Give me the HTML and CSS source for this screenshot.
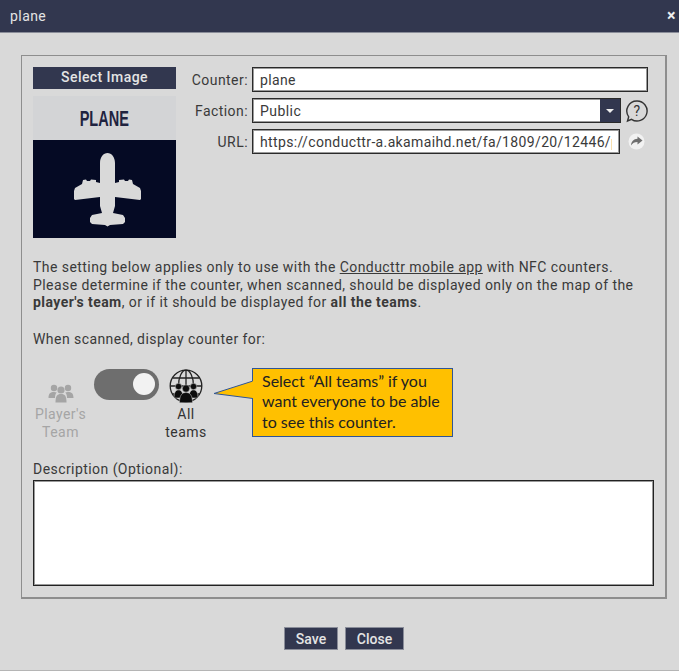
FILE: index.html
```html
<!DOCTYPE html>
<html lang="en">
<head>
  <meta charset="UTF-8" />
  <meta name="viewport" content="width=device-width, initial-scale=1.0"/>
  <title>plane</title>
  <link rel="stylesheet" href="styles.css">
</head>
<body>
  <div class="dialog">
    <div class="title-bar">
      <span class="title">plane</span>
      <span class="close-x">&#215;</span>
    </div>

    <div class="panel">
      <div class="top-row">
        <div class="image-col">
          <div class="select-image">Select Image</div>
          <div class="thumb">
            <div class="thumb-top"><span class="thumb-name">PLANE</span></div>
            <div class="thumb-bottom">
              <svg width="143" height="98" viewBox="0 0 143 98">
                <path fill="#d9d9d9" d="M74.500 13C70.500 13 67 17 67 23V43L63 42V40L58 39.500L57 41H54L53 39.500L50 40L49 44L42 48L41 51V59L42 60L67 57V66L69 73L59 75L57 78V82L59 84L72 85L74.500 86.500L77 85L90 84L92 82V78L90 75L80 73L82 66V57L107 60L108 59V51L107 48L100 44L99 40L96 39.500L95 41H92L91 39.500L86 40V42L82 43V23C82 17 78.500 13 74.500 13Z"/>
              </svg>
            </div>
          </div>
        </div>

        <div class="fields">
          <div class="field">
            <label class="field-label">Counter:</label>
            <input class="text-input counter-input" type="text" value="plane" />
          </div>
          <div class="field faction-field">
            <label class="field-label">Faction:</label>
            <div class="select-box">
              <span class="select-value">Public</span>
              <span class="select-arrow"></span>
            </div>
            <svg class="help-icon" width="24" height="24" viewBox="0 0 24 24">
              <path fill="none" stroke="#333" stroke-width="1.400" d="M12 2a10 10 0 1 1-5.500 18.300L2.500 22l1.200-4.200A10 10 0 0 1 12 2Z"/>
              <text x="12" y="17" text-anchor="middle" class="help-mark">?</text>
            </svg>
          </div>
          <div class="field url-field">
            <label class="field-label">URL:</label>
            <input class="text-input url-input" type="text" value="https://conducttr-a.akamaihd.net/fa/1809/20/12446/plane.png" />
            <svg class="share-icon" width="17" height="17" viewBox="0 0 17 17">
              <circle cx="8.500" cy="8.500" r="8" fill="#f2f2f2"/>
              <path fill="#6f6f6f" d="M9.500 3.500L14.500 7.500L9.500 11.500V9C6.500 9 4.500 10 3 12.500C3.300 8.800 5.500 6 9.500 5.800Z"/>
            </svg>
          </div>
        </div>
      </div>

      <p class="note">The setting below applies only to use with the <u>Conducttr mobile app</u> with NFC counters.<br>
        Please determine if the counter, when scanned, should be displayed only on the map of the<br>
        <b>player's team</b>, or if it should be displayed for <b>all the teams</b>.</p>

      <p class="scan-label">When scanned, display counter for:</p>

      <div class="scan-row">
        <div class="scan-option off">
          <div class="scan-icon">
            <svg width="26" height="20" viewBox="0 0 26 20">
              <g fill="#a5a5a5">
                <circle cx="6" cy="5" r="3.200"/>
                <circle cx="20" cy="5" r="3.200"/>
                <circle cx="13" cy="7" r="3.600"/>
                <path d="M0.500 15C0.500 10.500 2.500 9 6 9C7 9 8 9.200 8.700 9.600C7.500 10.800 7 12.500 7 15Z"/>
                <path d="M25.500 15C25.500 10.500 23.500 9 20 9C19 9 18 9.200 17.300 9.600C18.500 10.800 19 12.500 19 15Z"/>
                <path d="M7.500 19.500C7.500 13 9 11 13 11C17 11 18.500 13 18.500 19.500Z"/>
              </g>
            </svg>
          </div>
          <div class="scan-text">Player's<br>Team</div>
        </div>

        <div class="toggle"><span class="toggle-knob"></span></div>

        <div class="scan-option on">
          <div class="scan-icon">
            <svg width="34" height="34" viewBox="0 0 34 34">
              <g fill="none" stroke="#222" stroke-width="1.300">
                <circle cx="17" cy="17" r="15.800"/>
                <ellipse cx="17" cy="17" rx="7.500" ry="15.800"/>
                <path d="M17 1.200V33M1.200 17H32.800M3.500 9H30.500M3.500 25H30.500"/>
              </g>
              <g fill="#0c0c0c" stroke="#d9d9d9" stroke-width="0.500">
                <circle cx="9.500" cy="17.500" r="3.200"/>
                <circle cx="24.500" cy="17.500" r="3.200"/>
                <path d="M5 29C5 23.500 6.500 21 9.500 21C12.500 21 14 23.500 14 29Z"/>
                <path d="M20 29C20 23.500 21.500 21 24.500 21C27.500 21 29 23.500 29 29Z"/>
                <circle cx="17" cy="19.500" r="3.700"/>
                <path d="M10.500 33.800C10.500 26.500 12.800 23.500 17 23.500C21.200 23.500 23.500 26.500 23.500 33.800Z"/>
              </g>
            </svg>
          </div>
          <div class="scan-text">All<br>teams</div>
        </div>

        <div class="callout">
          <svg class="callout-tail" width="41" height="21" viewBox="0 0 41 21">
            <path fill="#ffc000" stroke="#2f5597" d="M40 1L1 13.500L40 18.500"/>
            <path fill="#ffc000" d="M39 1.500H41V18H39Z"/>
          </svg>
          Select &ldquo;All teams&rdquo; if you<br>want everyone to be able<br>to see this counter.
        </div>
      </div>

      <label class="desc-label">Description (Optional):</label>
      <textarea class="desc-input"></textarea>
    </div>

    <div class="buttons">
      <button class="btn save-btn">Save</button>
      <button class="btn close-btn">Close</button>
    </div>
  </div>
</body>
</html>
```

FILE: styles.css
```css
html, body {
  margin: 0;
  padding: 0;
}
body {
  font-family: Roboto, "Liberation Sans", sans-serif;
  font-size: 14px;
  letter-spacing: 0.44px;
  color: #3a3a3a;
  background: #d9d9d9;
}
.dialog {
  width: 679px;
  height: 671px;
  box-sizing: border-box;
  overflow: hidden;
  border-bottom: 1px solid #b5b5b5;
}
.title-bar {
  height: 33px;
  background: #32374f;
  border-bottom: 1px solid #8a8d99;
  box-sizing: border-box;
  color: #e4e4e4;
  display: flex;
  align-items: center;
  justify-content: space-between;
  padding: 0 3px 1px 10px;
}
.title {
  font-size: 14px;
}
.close-x {
  font-size: 16px;
  font-weight: bold;
  color: #eee;
}
.panel {
  margin: 22px 12px 0 21px;
  box-sizing: border-box;
  height: 544px;
  border: 1px solid #8e8e8e;
  border-width: 1px 2px 2px 1px;
  padding: 11px 11px 0 11px;
}
.top-row {
  display: flex;
  height: 171px;
}
.image-col {
  width: 143px;
}
.select-image {
  height: 22px;
  line-height: 21px;
  background: #32374f;
  color: #e4e4e4;
  text-align: center;
  font-weight: 500;
  font-size: 14px;
}
.thumb {
  margin-top: 7px;
}
.thumb-top {
  height: 44px;
  background: #d3d4d6;
  text-align: center;
  line-height: 46px;
}
.thumb-name {
  display: inline-block;
  font-family: "Liberation Sans", sans-serif;
  font-size: 22px;
  font-weight: bold;
  letter-spacing: 0;
  color: #1f2340;
  transform: scaleX(0.66);
}
.thumb-bottom {
  height: 98px;
  background: #050a24;
}
.thumb-bottom svg {
  display: block;
}
.fields {
  margin-left: 14px;
  flex: 1;
}
.field {
  display: flex;
  align-items: center;
  height: 25px;
}
.faction-field {
  margin-top: 6px;
}
.url-field {
  margin-top: 6px;
}
.field-label {
  width: 58px;
  margin-right: 4px;
  text-align: right;
  white-space: nowrap;
}
.text-input {
  font-family: Roboto, "Liberation Sans", sans-serif;
  font-size: 14px;
  letter-spacing: 0.36px;
  color: #3a3a3a;
  background: #fff;
  height: 25px;
  box-sizing: border-box;
  border: 1px solid #2a2a2a;
  box-shadow: inset 0 0 0 1px #9a9a9a;
  padding: 0 7px;
  outline: none;
  border-radius: 0;
}
.counter-input {
  width: 396px;
}
.url-input {
  width: 368px;
}
.select-box {
  width: 369px;
  height: 25px;
  box-sizing: border-box;
  background: #fff;
  border: 1px solid #2a2a2a;
  box-shadow: inset 0 0 0 1px #9a9a9a;
  display: flex;
  align-items: center;
  justify-content: space-between;
  padding-left: 7px;
}
.select-arrow {
  width: 20px;
  height: 23px;
  background: #32374f;
  position: relative;
}
.select-arrow::after {
  content: "";
  position: absolute;
  left: 6px;
  top: 10px;
  border-left: 4px solid transparent;
  border-right: 4px solid transparent;
  border-top: 4px solid #eee;
}
.help-icon {
  margin-left: 4px;
}
.help-mark {
  font-size: 14px;
  font-family: Roboto, sans-serif;
  fill: #333;
}
.share-icon {
  margin-left: 8px;
}
.note {
  margin: 21px 0 0;
  line-height: 17.5px;
}
.scan-label {
  margin: 18px 0 0;
  line-height: 18px;
}
.scan-row {
  position: relative;
  display: flex;
  align-items: flex-start;
  margin-top: 21px;
  height: 91px;
}
.scan-option {
  text-align: center;
  line-height: 18px;
}
.scan-option.off {
  width: 55px;
  color: #a5a5a5;
}
.scan-option.on {
  width: 50px;
  margin-left: 2px;
  color: #333;
}
.scan-icon {
  height: 34px;
  display: flex;
  align-items: flex-end;
  justify-content: center;
  margin-bottom: 2px;
}
.toggle {
  width: 65px;
  height: 31px;
  border-radius: 15.5px;
  background: #6e6e6e;
  margin-left: 6px;
  display: flex;
  align-items: center;
  justify-content: flex-end;
  padding-right: 4px;
  box-sizing: border-box;
}
.toggle-knob {
  width: 22px;
  height: 22px;
  border-radius: 50%;
  background: #f2f2f2;
}
.callout {
  position: absolute;
  left: 219px;
  top: -1px;
  width: 201px;
  height: 69px;
  box-sizing: border-box;
  background: #ffc000;
  border: 1px solid #2f5597;
  padding: 2px 0 0 9px;
  font-family: Lato, sans-serif;
  font-size: 16px;
  letter-spacing: 0;
  line-height: 20.5px;
  color: #222;
}
.callout-tail {
  position: absolute;
  left: -40px;
  top: 11px;
}
.desc-label {
  display: block;
  line-height: 18px;
}
.desc-input {
  display: block;
  margin-top: 2px;
  width: 621px;
  height: 106px;
  box-sizing: border-box;
  border: 1px solid #222;
  box-shadow: inset 0 0 0 1px #9a9a9a;
  background: #fff;
  resize: none;
  outline: none;
}
.buttons {
  display: flex;
  justify-content: center;
  gap: 7px;
  margin-top: 28px;
  padding-left: 9px;
}
.btn {
  height: 23px;
  box-sizing: border-box;
  background: #32374f;
  border: 1px solid #8a8d99;
  color: #e4e4e4;
  font-family: Roboto, sans-serif;
  font-size: 14px;
  font-weight: 500;
  padding: 0;
}
.save-btn {
  width: 54px;
}
.close-btn {
  width: 59px;
}
```
